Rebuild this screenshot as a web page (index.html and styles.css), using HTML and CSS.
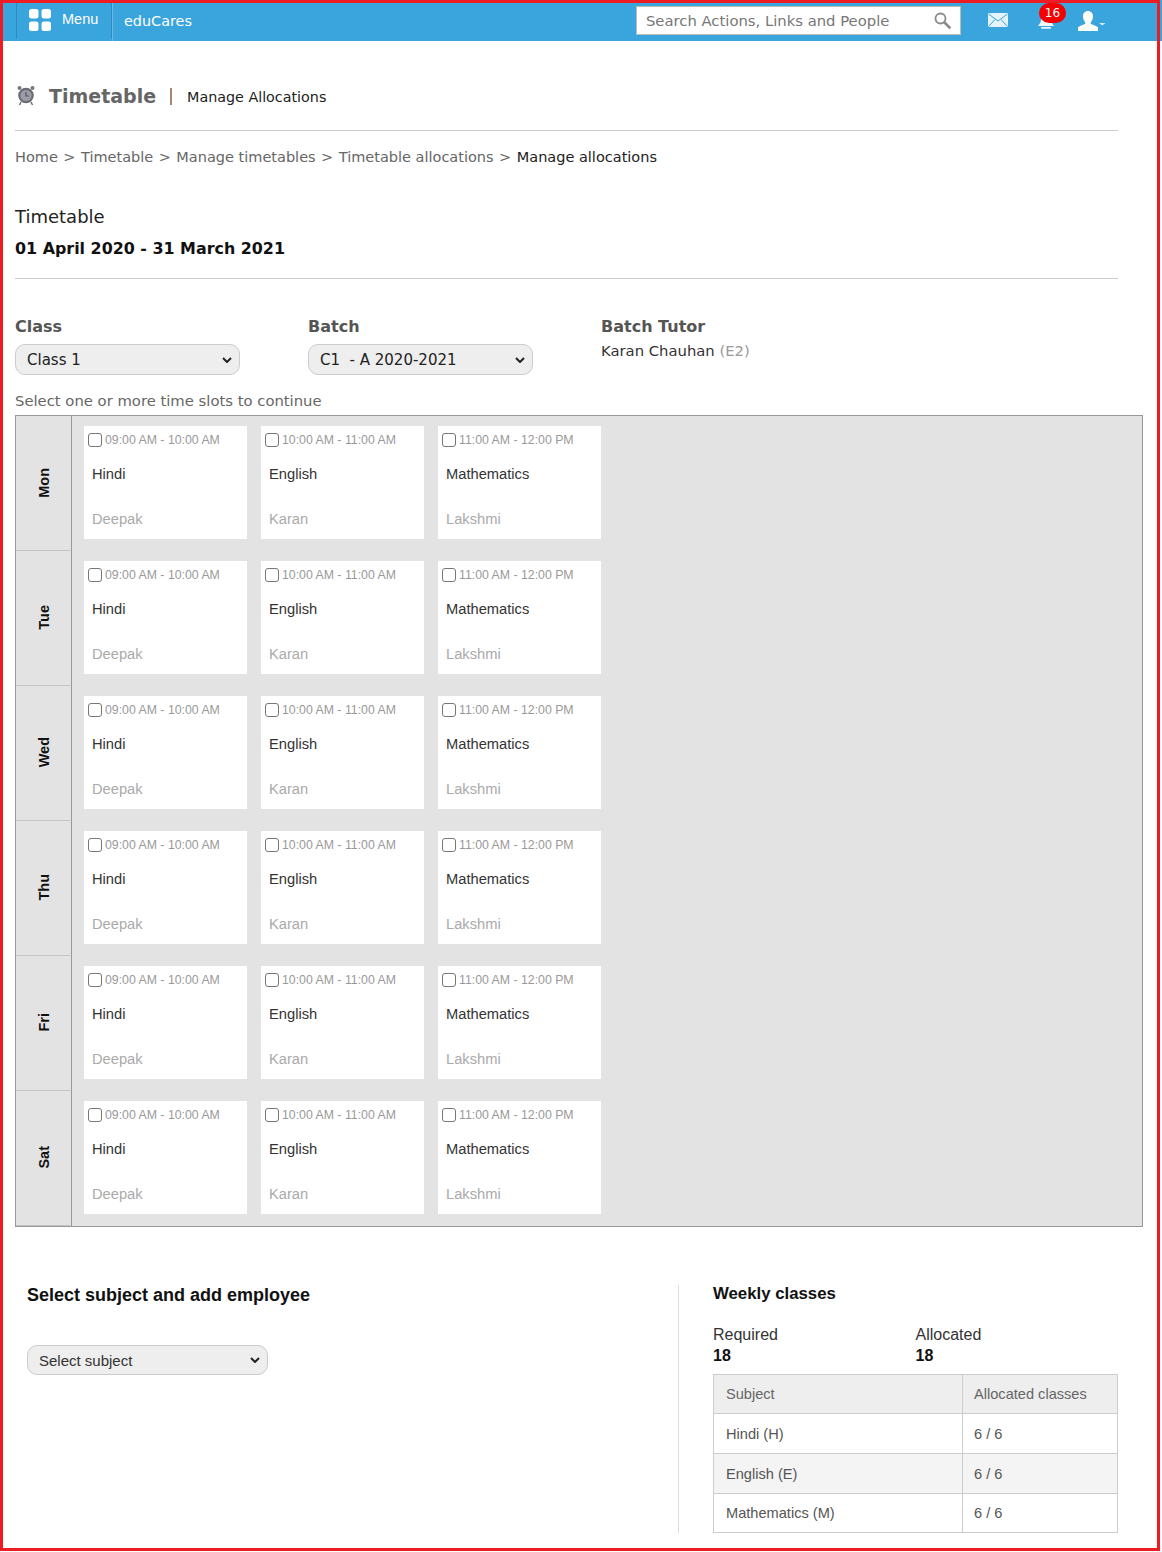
FILE: index.html
```html
<!DOCTYPE html>
<html lang="en">
<head>
  <meta charset="UTF-8">
  <meta name="viewport" content="width=device-width, initial-scale=1.0">
  <title>Manage Allocations</title>
  <link rel="stylesheet" href="styles.css">
</head>
<body>
  <div class="frame"></div>

  <header class="topbar">
    <div class="menu-btn">
      <svg class="menu-icon" width="22" height="22" viewBox="0 0 22 22" fill="#fff">
        <rect x="0" y="0" width="9.500" height="9.500" rx="2.500"/>
        <rect x="12.500" y="0" width="9.500" height="9.500" rx="2.500"/>
        <rect x="0" y="12.500" width="9.500" height="9.500" rx="2.500"/>
        <rect x="12.500" y="12.500" width="9.500" height="9.500" rx="2.500"/>
      </svg>
      <span>Menu</span>
    </div>
    <div class="brand">eduCares</div>
    <div class="search">
      <span>Search Actions, Links and People</span>
      <svg width="17" height="17" viewBox="0 0 17 17" fill="none" stroke="#8a8a8a">
        <circle cx="6.500" cy="6.500" r="5" stroke-width="1.800"/>
        <path d="M10.500 10.500l5 5" stroke-width="2.600" stroke-linecap="round"/>
      </svg>
    </div>
    <svg class="mail" width="20" height="14" viewBox="0 0 20 14">
      <rect width="20" height="14" rx="1" fill="#e4f2fa"/>
      <path d="M0.500 1l9.500 7 9.500-7M0.500 13.500l6.500-7M19.500 13.500l-6.500-7" fill="none" stroke="#3aa5dc" stroke-width="1"/>
    </svg>
    <div class="bell">
      <svg width="18" height="16" viewBox="0 0 18 16" fill="#eef7fc">
        <path d="M9 0c3.500 0 5 2.500 5 5.500 0 3 1.500 4.500 3 6.500H1c1.500-2 3-3.500 3-6.500C4 2.500 5.500 0 9 0z"/>
        <rect x="4" y="13" width="10" height="1.800" rx="0.900"/>
      </svg>
      <span class="badge">16</span>
    </div>
    <svg class="user" width="28" height="20" viewBox="0 0 28 20" fill="#fff">
      <path d="M10 0c3 0 5 2.300 5 5.500 0 2.500-1 4.500-2.300 5.700v1.500c2 1 5.300 2 7.300 3.500V20H0v-3.800c2-1.500 5.300-2.500 7.300-3.500v-1.500C6 10 5 8 5 5.500 5 2.300 7 0 10 0z"/>
      <path d="M21 12h6.500l-3.250 2.500z" fill="#d5ebf7"/>
    </svg>
  </header>

  <main class="page">
    <div class="page-title">
      <svg class="clock" width="20" height="21" viewBox="0 0 20 21">
        <circle cx="3.500" cy="3" r="2" fill="#77777f"/>
        <circle cx="16.500" cy="3" r="2" fill="#77777f"/>
        <path d="M5 17l-1.500 3M15 17l1.500 3" stroke="#66666e" stroke-width="1.400"/>
        <circle cx="10" cy="10.500" r="7.800" fill="#6b6b74"/>
        <circle cx="10" cy="10.500" r="5.600" fill="#9c9ca8"/>
        <path d="M10 7V11H13" fill="none" stroke="#55555c" stroke-width="1.200"/>
      </svg>
      <h1>Timetable</h1>
      <span class="title-sep"></span>
      <span class="title-sub">Manage Allocations</span>
    </div>

    <div class="crumbs">
      <span>Home</span><span class="gt">&gt;</span><span>Timetable</span><span class="gt">&gt;</span><span>Manage timetables</span><span class="gt">&gt;</span><span>Timetable allocations</span><span class="gt">&gt;</span><span class="current">Manage allocations</span>
    </div>

    <div class="period">
      <div class="period-name">Timetable</div>
      <div class="period-dates">01 April 2020 - 31 March 2021</div>
    </div>

    <div class="filters">
      <div class="filter">
        <label for="cls">Class</label>
        <select id="cls" class="pill"><option>Class 1</option></select>
      </div>
      <div class="filter">
        <label for="batch">Batch</label>
        <select id="batch" class="pill"><option>C1&nbsp; - A 2020-2021</option></select>
      </div>
      <div class="filter">
        <label>Batch Tutor</label>
        <div class="tutor">Karan Chauhan <span>(E2)</span></div>
      </div>
    </div>

    <p class="hint">Select one or more time slots to continue</p>

    <div class="timetable" id="timetable"></div>

    <div class="bottom">
      <section class="add-employee">
        <h2>Select subject and add employee</h2>
        <select class="pill subject-select"><option>Select subject</option></select>
      </section>
      <section class="weekly">
        <h3>Weekly classes</h3>
        <div class="counts">
          <div>Required<b>18</b></div>
          <div>Allocated<b>18</b></div>
        </div>
        <table class="summary">
          <tr><th>Subject</th><th>Allocated classes</th></tr>
          <tr><td>Hindi (H)</td><td>6 / 6</td></tr>
          <tr class="alt"><td>English (E)</td><td>6 / 6</td></tr>
          <tr class="last"><td>Mathematics (M)</td><td>6 / 6</td></tr>
        </table>
      </section>
    </div>
  </main>

  <script>
    const days = ['Mon', 'Tue', 'Wed', 'Thu', 'Fri', 'Sat'];
    const slots = [
      { time: '09:00 AM - 10:00 AM', subject: 'Hindi', teacher: 'Deepak' },
      { time: '10:00 AM - 11:00 AM', subject: 'English', teacher: 'Karan' },
      { time: '11:00 AM - 12:00 PM', subject: 'Mathematics', teacher: 'Lakshmi' }
    ];

    let html = '';
    days.forEach(function (day) {
      html += '<div class="day-row"><div class="day-name"><span>' + day + '</span></div><div class="day-slots">';
      slots.forEach(function (slot) {
        html += '<div class="slot">' +
          '<label class="slot-time"><input type="checkbox">' + slot.time + '</label>' +
          '<div class="slot-subject">' + slot.subject + '</div>' +
          '<div class="slot-teacher">' + slot.teacher + '</div>' +
          '</div>';
      });
      html += '</div></div>';
    });
    document.getElementById('timetable').innerHTML = html;
  </script>
</body>
</html>
```
FILE: styles.css
```css
body {
  margin: 0;
  padding: 0;
  font-family: "DejaVu Sans", Verdana, sans-serif;
  background-color: #fff;
  color: #333;
}
.frame {
  position: absolute;
  top: 0;
  left: 0;
  width: 1154px;
  height: 1545px;
  border: 3px solid #ed1c24;
  pointer-events: none;
}

/* top bar */
.topbar {
  height: 41px;
  display: flex;
  align-items: center;
  background-color: #3aa5dc;
  color: #fff;
}
.menu-btn {
  display: flex;
  align-items: center;
  align-self: stretch;
  margin: 0 0 2px 16px;
  padding-left: 12px;
  width: 82px;
  border-left: 1px solid #2f8bbb;
  border-right: 1px solid #2f8bbb;
  font-family: "Liberation Sans", Arial, sans-serif;
  font-size: 14.500px;
}
.menu-btn span {
  margin: -2px 0 0 11px;
}
.menu-icon {
  margin-top: 1px;
}
.brand {
  align-self: stretch;
  display: flex;
  align-items: center;
  padding-left: 11px;
  border-left: 1px solid #6db9e3;
  font-size: 14.400px;
}
.search {
  display: flex;
  align-items: center;
  justify-content: space-between;
  box-sizing: border-box;
  width: 325px;
  height: 29px;
  margin: -1px 0 0 444px;
  padding: 0 9px;
  background: #fff;
  border: 1px solid #bbb;
  color: #777;
  font-size: 14.800px;
}
.mail {
  margin: -1px 0 0 27px;
}
.bell {
  position: relative;
  margin: 3px 0 0 29px;
  width: 18px;
  height: 16px;
}
.badge {
  position: absolute;
  top: -11px;
  left: 2px;
  width: 27px;
  height: 20px;
  line-height: 20px;
  border-radius: 10px;
  background: #f40000;
  color: #fff;
  font-size: 12px;
  text-align: center;
}
.user {
  margin-left: 23px;
}

/* page */
.page {
  padding: 0 44px 0 15px;
}
.page-title {
  display: flex;
  align-items: center;
  box-sizing: border-box;
  height: 90px;
  padding-top: 21px;
  border-bottom: 1px solid #ccc;
}
.clock {
  margin: -1px 13px 0 1px;
}
.page-title h1 {
  margin: 0;
  font-size: 19px;
  font-weight: bold;
  color: #666;
}
.title-sep {
  width: 2px;
  height: 17px;
  margin: 0 15px 0 14px;
  background: #a8866e;
}
.title-sub {
  margin-top: 2px;
  font-size: 14.300px;
  color: #222;
}
.crumbs {
  margin-top: 18px;
  font-size: 14.500px;
  color: #666;
}
.crumbs .gt {
  margin: 0 5.500px;
}
.crumbs .current {
  color: #222;
}
.period {
  margin-top: 41px;
  padding-bottom: 20px;
  border-bottom: 1px solid #ccc;
}
.period-name {
  font-size: 18px;
  color: #222;
}
.period-dates {
  margin-top: 12px;
  font-size: 15.900px;
  font-weight: bold;
  color: #111;
}
.filters {
  display: flex;
  margin-top: 38px;
}
.filter {
  width: 293px;
}
.filter label {
  display: block;
  font-size: 16px;
  font-weight: bold;
  color: #555;
}
.pill {
  display: block;
  appearance: none;
  box-sizing: border-box;
  width: 225px;
  height: 31px;
  margin-top: 8px;
  padding: 0 11px;
  background: #eee url("data:image/svg+xml,%3Csvg xmlns='http://www.w3.org/2000/svg' width='10' height='6' viewBox='0 0 10 6'%3E%3Cpath d='M1 1l4 4 4-4' fill='none' stroke='%23222' stroke-width='2'/%3E%3C/svg%3E") no-repeat right 7px center;
  border: 1px solid #ccc;
  border-radius: 10px;
  font-family: "DejaVu Sans", Verdana, sans-serif;
  font-size: 15px;
  color: #222;
}
.tutor {
  margin-top: 6px;
  font-size: 14.800px;
  color: #333;
}
.tutor span {
  color: #999;
}
.hint {
  margin: 17px 0 6px;
  font-size: 14.800px;
  color: #666;
}

/* timetable grid */
.timetable {
  box-sizing: border-box;
  width: 1128px;
  background-color: #e3e3e3;
  border: 1px solid #999;
  font-family: "Liberation Sans", Arial, sans-serif;
}
.day-row {
  display: flex;
  height: 135px;
}
.day-name {
  box-sizing: border-box;
  position: relative;
  display: flex;
  align-items: center;
  justify-content: center;
  width: 56px;
  border-right: 1px solid #999;
  font-size: 14.500px;
  font-weight: bold;
  color: #111;
}
.day-name span {
  writing-mode: vertical-rl;
  transform: rotate(180deg);
  margin-bottom: 2px;
}
.day-name::after {
  content: "";
  position: absolute;
  left: 0;
  right: 1px;
  bottom: 0;
  height: 1px;
  background: #c4c4c4;
}
.day-slots {
  display: flex;
  gap: 14px;
  padding: 10px 0 0 12px;
}
.slot {
  box-sizing: border-box;
  width: 163px;
  height: 113px;
  padding: 6px 4px 0;
  background: #fff;
}
.slot-time {
  display: flex;
  align-items: center;
  height: 15px;
  font-size: 12.300px;
  color: #999;
}
.slot-time input {
  appearance: none;
  box-sizing: border-box;
  width: 14px;
  height: 14px;
  margin: 0 3px 0 0;
  background: #fff;
  border: 1px solid #767676;
  border-radius: 3px;
}
.slot-subject {
  margin: 19px 0 0 4px;
  font-size: 14.700px;
  line-height: 16px;
  color: #333;
}
.slot-teacher {
  margin: 29px 0 0 4px;
  font-size: 14.700px;
  line-height: 16px;
  color: #aaa;
}

/* bottom panels */
.bottom {
  display: flex;
  margin-top: 58px;
  font-family: "Liberation Sans", Arial, sans-serif;
}
.add-employee {
  box-sizing: border-box;
  width: 664px;
  padding-left: 12px;
  border-right: 1px solid #ddd;
}
.add-employee h2 {
  margin: -1px 0 0;
  font-size: 18px;
  line-height: 22px;
  color: #111;
}
.subject-select {
  width: 241px;
  height: 30px;
  margin-top: 39px;
  font-family: "Liberation Sans", Arial, sans-serif;
  color: #333;
}
.weekly {
  width: 405px;
  margin-left: 34px;
}
.weekly h3 {
  margin: -1px 0 0;
  font-size: 16.800px;
  line-height: 20px;
  color: #111;
}
.counts {
  display: flex;
  margin-top: 20px;
  font-size: 16px;
  line-height: 21px;
  color: #333;
}
.counts div {
  width: 202.500px;
}
.counts b {
  display: block;
  color: #111;
}
.summary {
  width: 405px;
  margin-top: 8px;
  border-collapse: collapse;
  font-size: 14.600px;
  color: #555;
}
.summary th,
.summary td {
  height: 39px;
  padding: 0 11px;
  border: 1px solid #ccc;
  font-weight: normal;
  text-align: left;
}
.summary th:first-child,
.summary td:first-child {
  padding-left: 12px;
}
.summary th {
  height: 38px;
  background: #eee;
  color: #666;
}
.summary th:first-child {
  width: 225px;
}
.summary .alt td {
  background: #f4f4f4;
}
.summary .last td {
  height: 38px;
}
```
